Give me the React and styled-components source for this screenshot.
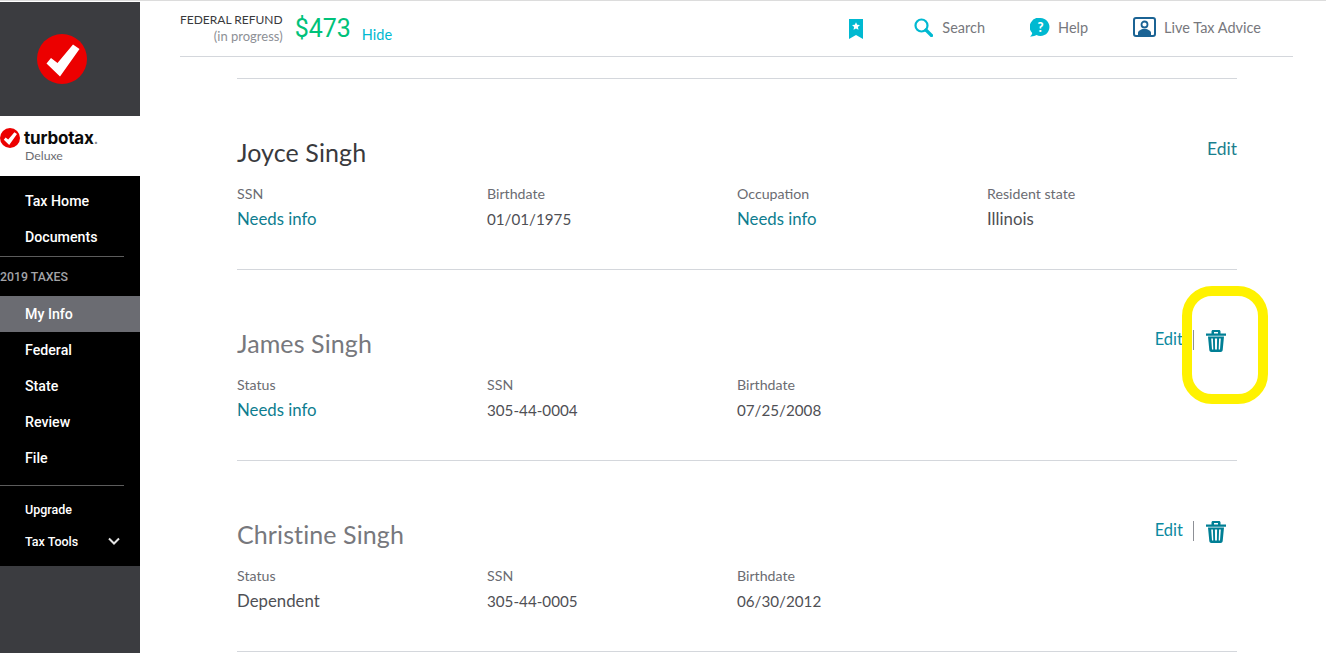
import styled, { createGlobalStyle } from 'styled-components';

const GlobalStyle = createGlobalStyle`
  html, body {
    margin: 0;
    padding: 0;
    background: #fff;
    overflow: hidden;
  }
`;

const people = [
  {
    name: 'Joyce Singh',
    primary: true,
    fields: [
      { label: 'SSN', value: 'Needs info', link: true },
      { label: 'Birthdate', value: '01/01/1975', numeric: true },
      { label: 'Occupation', value: 'Needs info', link: true },
      { label: 'Resident state', value: 'Illinois' },
    ],
  },
  {
    name: 'James Singh',
    fields: [
      { label: 'Status', value: 'Needs info', link: true },
      { label: 'SSN', value: '305-44-0004', numeric: true },
      { label: 'Birthdate', value: '07/25/2008', numeric: true },
    ],
  },
  {
    name: 'Christine Singh',
    fields: [
      { label: 'Status', value: 'Dependent' },
      { label: 'SSN', value: '305-44-0005', numeric: true },
      { label: 'Birthdate', value: '06/30/2012', numeric: true },
    ],
  },
];

const CheckBadge = ({ size }) => (
  <svg width={size} height={size} viewBox="0 0 50 50">
    <circle cx="25" cy="25" r="25" fill="#ec0000" />
    <path d="M9.5 29.5 L14 24 L20.5 29 L36 10.5 L42.5 15 L23 42.5 Z" fill="#fff" />
  </svg>
);

const TrashIcon = () => (
  <svg width="20" height="22" viewBox="0 0 20 22" fill="#007f95">
    <path d="M5.500 3.500V1.500C5.500 .6 6.100 0 7 0h6c.9 0 1.500.6 1.500 1.500v2H20v2.200H0V3.500zM8 3.500h4V2H8z" fillRule="evenodd" />
    <path d="M2 6.500h16l-1.300 13.500c-.1 1.100-1 2-2.100 2H5.400c-1.100 0-2-.9-2.100-2zM5.200 8.500l.8 11h1.300l-.4-11zM8.900 8.500l.2 11h1.800l.2-11zM13.100 8.500l-.4 11H14l.8-11z" fillRule="evenodd" />
  </svg>
);

const BookmarkIcon = () => (
  <svg width="14" height="20" viewBox="0 0 14 20">
    <path d="M0 0h14v20l-7-4-7 4z" fill="#00b9d1" />
    <path d="M7 3.200l1.200 2.600 2.800.3-2.100 1.900.6 2.800L7 9.400l-2.500 1.400.6-2.800L3 6.100l2.800-.3z" fill="#fff" />
  </svg>
);

const SearchIcon = () => (
  <svg width="19" height="19" viewBox="0 0 19 19" fill="none">
    <circle cx="7.500" cy="7.500" r="6" stroke="#00b9d1" strokeWidth="2.200" />
    <path d="M12 12l5.500 5.500" stroke="#00b9d1" strokeWidth="3.200" strokeLinecap="round" />
  </svg>
);

const HelpIcon = () => (
  <svg width="20" height="19" viewBox="0 0 20 19">
    <path d="M10.500 0a9 9 0 1 1-4 17.100C5 18.200 2.500 18.800 0 18.500c1.300-.8 2-2 2.200-3.500A9 9 0 0 1 10.500 0z" fill="#00b9d1" />
    <text x="10.500" y="14" textAnchor="middle" fontFamily="Lato, sans-serif" fontWeight="900" fontSize="13" fill="#fff">?</text>
  </svg>
);

const AdviceIcon = () => (
  <svg width="23" height="20" viewBox="0 0 23 20" fill="none">
    <rect x="1" y="1" width="21" height="18" rx="2" fill="#fff" stroke="#1b6394" strokeWidth="2" />
    <circle cx="11.500" cy="7.500" r="3" stroke="#1b6394" strokeWidth="1.800" />
    <path d="M5 19v-3.500c0-1.500 3-3 4.500-3.500h4c1.500.5 4.500 2 4.500 3.500V19z" fill="#1b6394" />
  </svg>
);

const ChevronIcon = () => (
  <svg width="12" height="8" viewBox="0 0 12 8" fill="none">
    <path d="M1 1.500l5 5 5-5" stroke="#e4e4e4" strokeWidth="2" />
  </svg>
);

const App = () => {
  return (
    <>
      <GlobalStyle />
      <Page>
        <Sidebar>
          <BadgeBlock>
            <CheckBadge size={50} />
          </BadgeBlock>
          <LogoBlock>
            <LogoRow>
              <CheckBadge size={20} />
              <LogoText>
                turbotax<LogoDot>.</LogoDot>
              </LogoText>
            </LogoRow>
            <Edition>Deluxe</Edition>
          </LogoBlock>
          <Nav>
            <NavItem>Tax Home</NavItem>
            <NavItem>Documents</NavItem>
            <NavDivider />
            <NavHeading>2019 TAXES</NavHeading>
            <NavItem $active>My Info</NavItem>
            <NavItem>Federal</NavItem>
            <NavItem>State</NavItem>
            <NavItem>Review</NavItem>
            <NavItem>File</NavItem>
            <NavDivider $low />
            <SmallNavItem>Upgrade</SmallNavItem>
            <SmallNavItem>
              Tax Tools
              <ChevronIcon />
            </SmallNavItem>
          </Nav>
        </Sidebar>
        <Main>
          <TopBar>
            <Refund>
              <RefundLabel>
                <span>FEDERAL REFUND</span>
                <Progress>(in progress)</Progress>
              </RefundLabel>
              <Amount>$473</Amount>
              <HideLink>Hide</HideLink>
            </Refund>
            <Tools>
              <BookmarkSlot>
                <BookmarkIcon />
              </BookmarkSlot>
              <Tool>
                <SearchIcon />
                Search
              </Tool>
              <Tool>
                <HelpIcon />
                Help
              </Tool>
              <Tool>
                <AdviceIcon />
                Live Tax Advice
              </Tool>
            </Tools>
          </TopBar>
          <People>
            {people.map((person) => (
              <Person key={person.name}>
                <PersonHead>
                  <Name $primary={person.primary}>{person.name}</Name>
                  {person.primary ? (
                    <PrimaryEdit>Edit</PrimaryEdit>
                  ) : (
                    <Actions>
                      <EditLink>Edit</EditLink>
                      <TrashButton>
                        <TrashIcon />
                      </TrashButton>
                    </Actions>
                  )}
                </PersonHead>
                <Fields>
                  {person.fields.map((field) => (
                    <div key={field.label}>
                      <FieldLabel>{field.label}</FieldLabel>
                      <FieldValue $link={field.link} $numeric={field.numeric}>
                        {field.value}
                      </FieldValue>
                    </div>
                  ))}
                </Fields>
              </Person>
            ))}
          </People>
        </Main>
        <Highlight />
      </Page>
    </>
  );
};

export default App;

const Page = styled.div`
  position: relative;
  display: flex;
  width: 1326px;
  height: 653px;
  overflow: hidden;
  box-sizing: border-box;
  border-top: 1px solid #dcdcdc;
  padding-top: 1px;
  font-family: Lato, 'Noto Sans', sans-serif;
  background: #fff;
`;

const Sidebar = styled.aside`
  flex: 0 0 140px;
  display: flex;
  flex-direction: column;
  background: #3b3c40;
`;

const BadgeBlock = styled.div`
  height: 114px;
  display: flex;
  align-items: center;
  justify-content: center;
  padding-right: 16px;
  box-sizing: border-box;
`;

const LogoBlock = styled.div`
  height: 60px;
  background: #fff;
  padding-top: 12px;
  box-sizing: border-box;
`;

const LogoRow = styled.div`
  display: flex;
  align-items: center;
  gap: 4px;
  height: 20px;
`;

const LogoText = styled.span`
  font-family: Inter, sans-serif;
  font-size: 17px;
  font-weight: 700;
  letter-spacing: -0.2px;
  color: #0b0b0b;
`;

const LogoDot = styled.span`
  color: #8a8a8a;
  font-weight: 400;
`;

const Edition = styled.div`
  margin-left: 25px;
  font-size: 12.300px;
  line-height: 15px;
  color: #6b6c72;
`;

const Nav = styled.nav`
  height: 390px;
  background: #000;
  padding-top: 7px;
  box-sizing: border-box;
`;

const NavItem = styled.div`
  height: 36px;
  padding-left: 25px;
  display: flex;
  align-items: center;
  font-family: Roboto, sans-serif;
  font-size: 14.200px;
  font-weight: 500;
  color: #fff;
  background: ${(props) => (props.$active ? '#6b6c72' : 'transparent')};
`;

const SmallNavItem = styled.div`
  height: 32px;
  padding: 0 20px 0 25px;
  display: flex;
  align-items: center;
  justify-content: space-between;
  font-family: Roboto, sans-serif;
  font-size: 12.500px;
  font-weight: 500;
  color: #fff;
`;

const NavDivider = styled.div`
  height: 1px;
  margin: ${(props) => (props.$low ? '9px 16px 7px 0' : '1px 16px 0 0')};
  background: #5c5c5c;
`;

const NavHeading = styled.div`
  height: 39px;
  display: flex;
  align-items: center;
  font-family: Roboto, sans-serif;
  font-size: 12.300px;
  font-weight: 500;
  color: #a3a4a8;
`;

const Main = styled.main`
  flex: 1;
  padding: 0 33px 0 40px;
  min-width: 0;
`;

const TopBar = styled.header`
  height: 54px;
  display: flex;
  justify-content: space-between;
  border-bottom: 1px solid #d4d7dc;
`;

const Refund = styled.div`
  display: flex;
  align-items: flex-start;
  padding-top: 9px;
`;

const RefundLabel = styled.div`
  display: flex;
  flex-direction: column;
  align-items: flex-end;
  font-size: 12px;
  line-height: 17px;
  color: #393a3d;
`;

const Progress = styled.span`
  font-size: 13px;
  color: #8d9096;
`;

const Amount = styled.div`
  margin-left: 12px;
  margin-top: 3px;
  font-family: Roboto, sans-serif;
  font-size: 25px;
  line-height: 30px;
  color: #00c27a;
`;

const HideLink = styled.div`
  margin-left: 11px;
  margin-top: 14px;
  font-size: 14.500px;
  line-height: 20px;
  color: #00b9d1;
`;

const Tools = styled.div`
  display: flex;
  align-items: flex-start;
  padding: 15px 32px 0 0;
`;

const BookmarkSlot = styled.div`
  display: flex;
  margin-right: 51px;
  margin-top: 2px;
`;

const Tool = styled.div`
  display: flex;
  align-items: center;
  gap: 8px;
  height: 20px;
  margin-left: 45px;
  font-size: 14.500px;
  color: #77787d;

  &:nth-child(2) {
    margin-left: 0;
    gap: 9px;
  }
`;

const People = styled.section`
  margin: 21px 56px 0 57px;
  border-top: 1px solid #d4d7dc;
`;

const Person = styled.article`
  box-sizing: border-box;
  height: 191px;
  padding-top: 57px;
  border-bottom: 1px solid #d4d7dc;
`;

const PersonHead = styled.div`
  display: flex;
  justify-content: space-between;
  align-items: flex-start;
  height: 48px;
`;

const Name = styled.h2`
  margin: 0;
  font-size: 25px;
  font-weight: 400;
  letter-spacing: 0.1px;
  line-height: 32px;
  color: ${(props) => (props.$primary ? '#393a3d' : '#77787d')};
`;

const PrimaryEdit = styled.a`
  margin-top: 1px;
  font-size: 17.500px;
  line-height: 24px;
  color: #1a7f8e;
`;

const Actions = styled.div`
  display: flex;
  align-items: flex-start;
  margin-top: 3px;
`;

const EditLink = styled.a`
  font-size: 16.500px;
  line-height: 18px;
  color: #0b8aa0;
  padding-right: 10px;
  border-right: 1px solid #8d9096;
  height: 20px;
`;

const TrashButton = styled.button`
  border: 0;
  background: none;
  padding: 0;
  margin: 0 11px 0 12px;
  display: flex;
`;

const Fields = styled.div`
  display: grid;
  grid-template-columns: repeat(4, 250px);
`;

const FieldLabel = styled.div`
  font-size: 14.200px;
  line-height: 20px;
  color: #6b6c72;
`;

const FieldValue = styled.div`
  margin-top: 3px;
  font-size: ${(props) => (props.$numeric ? '15.200px' : '16.800px')};
  line-height: 24px;
  color: ${(props) => (props.$link ? '#0d7d8f' : '#4f5055')};
`;

const Highlight = styled.div`
  position: absolute;
  left: 1182px;
  top: 285px;
  width: 86px;
  height: 118px;
  box-sizing: border-box;
  border: 10px solid #fff200;
  border-radius: 30px;
  pointer-events: none;
`;
